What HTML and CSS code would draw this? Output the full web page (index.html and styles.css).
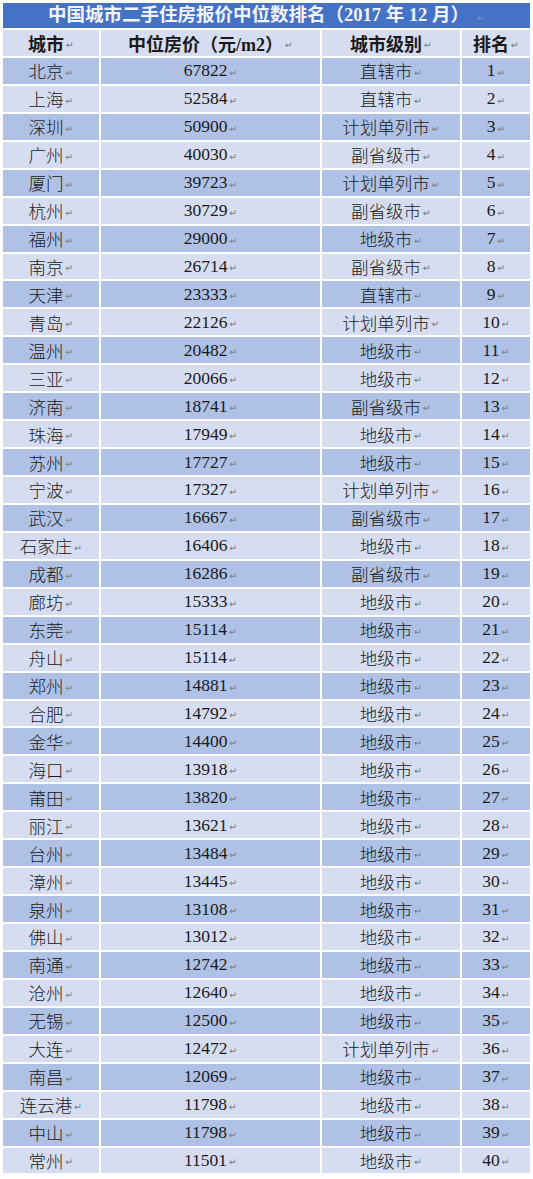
FILE: index.html
```html
<!DOCTYPE html>
<html lang="zh-CN">
<head>
<meta charset="utf-8">
<title>中国城市二手住房报价中位数排名</title>
<link rel="stylesheet" href="styles.css">
</head>
<body>
<div class="sheet">
  <div class="title">中国城市二手住房报价中位数排名（2017 年 12 月）<span class="ret ret-t">↵</span></div>
  <div class="grid" id="grid">
    <div class="cell head">城市<span class="ret">↵</span></div>
    <div class="cell head">中位房价（元/m2）<span class="ret">↵</span></div>
    <div class="cell head">城市级别<span class="ret">↵</span></div>
    <div class="cell head">排名<span class="ret">↵</span></div>
  </div>
</div>
<script src="script.js"></script>
</body>
</html>
```
FILE: script.js
```js
var rows = [
["北京","67822","直辖市"],["上海","52584","直辖市"],["深圳","50900","计划单列市"],["广州","40030","副省级市"],
["厦门","39723","计划单列市"],["杭州","30729","副省级市"],["福州","29000","地级市"],["南京","26714","副省级市"],
["天津","23333","直辖市"],["青岛","22126","计划单列市"],["温州","20482","地级市"],["三亚","20066","地级市"],
["济南","18741","副省级市"],["珠海","17949","地级市"],["苏州","17727","地级市"],["宁波","17327","计划单列市"],
["武汉","16667","副省级市"],["石家庄","16406","地级市"],["成都","16286","副省级市"],["廊坊","15333","地级市"],
["东莞","15114","地级市"],["舟山","15114","地级市"],["郑州","14881","地级市"],["合肥","14792","地级市"],
["金华","14400","地级市"],["海口","13918","地级市"],["莆田","13820","地级市"],["丽江","13621","地级市"],
["台州","13484","地级市"],["漳州","13445","地级市"],["泉州","13108","地级市"],["佛山","13012","地级市"],
["南通","12742","地级市"],["沧州","12640","地级市"],["无锡","12500","地级市"],["大连","12472","计划单列市"],
["南昌","12069","地级市"],["连云港","11798","地级市"],["中山","11798","地级市"],["常州","11501","地级市"]
];
var grid = document.getElementById("grid");
rows.forEach(function (r, i) {
  var vals = [r[0], r[1], r[2], String(i + 1)];
  vals.forEach(function (v) {
    var c = document.createElement("div");
    c.className = "cell " + (i % 2 === 0 ? "dark" : "light");
    c.textContent = v;
    var s = document.createElement("span");
    s.className = "ret";
    s.textContent = "↵";
    c.appendChild(s);
    grid.appendChild(c);
  });
});
```
FILE: styles.css
```css
html, body {
  margin: 0;
  padding: 0;
  background: #ffffff;
}
.sheet {
  padding: 3px 3px 0 3px;
  width: 527px;
  font-family: "Liberation Serif", "Noto Sans CJK SC", serif;
  color: #1a1a1a;
}
.title {
  height: 25px;
  background: #4472c4;
  color: #f2f4fb;
  font-weight: bold;
  font-size: 18.5px;
  line-height: 25px;
  text-align: center;
  margin-bottom: 2px;
  white-space: nowrap;
}
.grid {
  display: grid;
  grid-template-columns: 96px 219px 138px 68px;
  grid-auto-rows: 25.95px;
  gap: 2px;
}
.cell {
  display: flex;
  align-items: center;
  justify-content: center;
  font-size: 17.5px;
  font-weight: 300;
  white-space: nowrap;
}
.head {
  background: #d7ddf0;
  font-weight: bold;
  font-size: 18px;
}
.dark {
  background: #afc2e6;
}
.light {
  background: #d7ddf0;
}
.ret {
  font-family: "DejaVu Sans", sans-serif;
  font-size: 9.5px;
  font-weight: normal;
  color: #7d828c;
  margin-left: 2px;
  margin-top: 3px;
}
.ret-t {
  color: #6f8fd0;
  margin-left: 8px;
}
```
